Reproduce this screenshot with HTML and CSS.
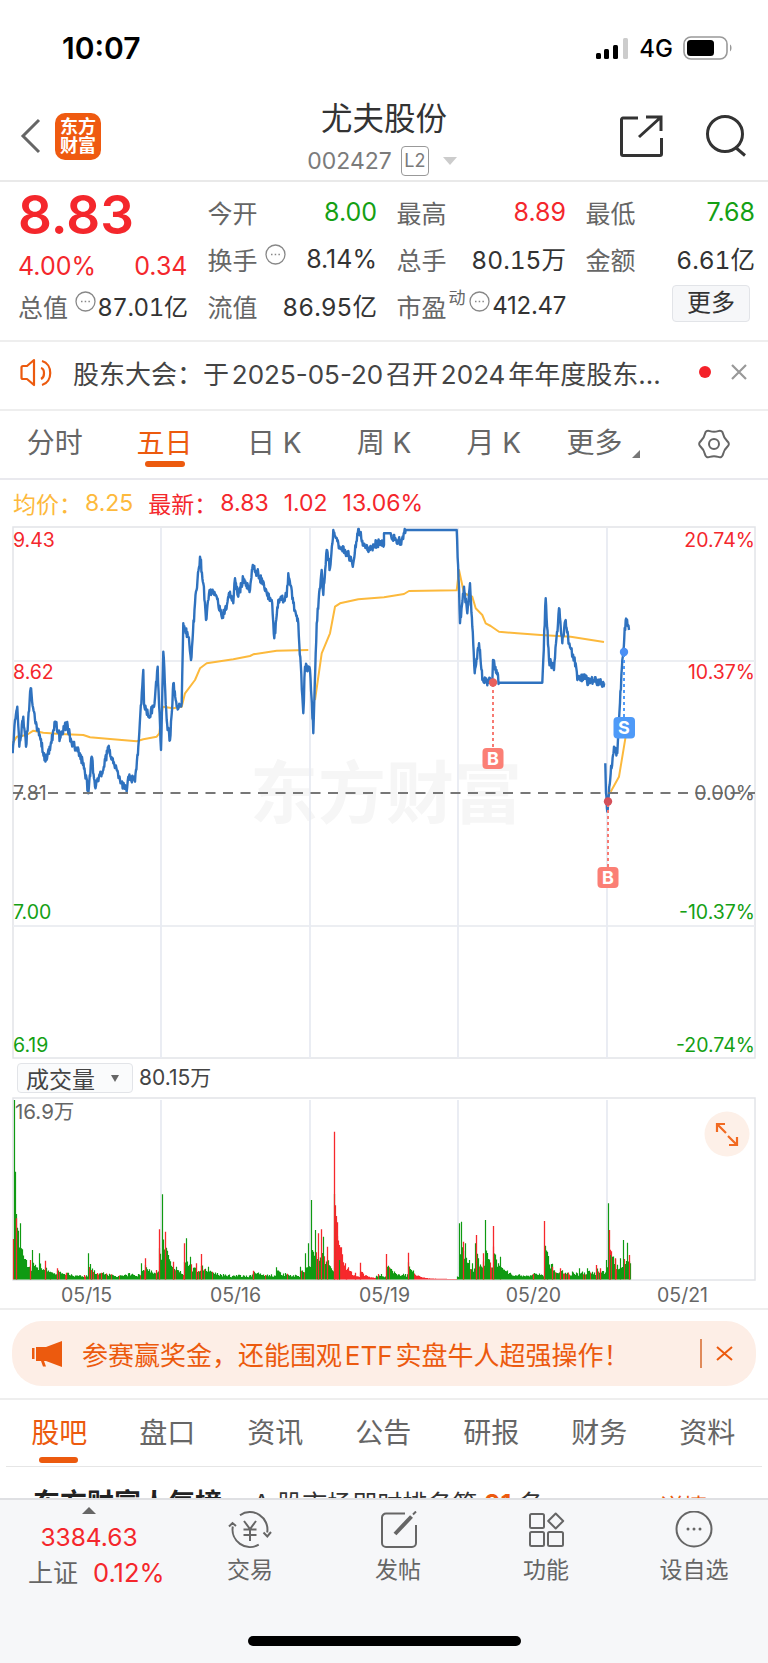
FILE: index.html
```html
<!DOCTYPE html>
<html lang="zh-CN">
<head>
    <meta charset="UTF-8">
    <meta name="viewport" content="width=device-width, initial-scale=1.0">
    <title>尤夫股份 002427</title>
    <link rel="stylesheet" href="styles.css">
</head>
<body>
    <div class="status-bar">
        <span class="time">10:07</span>
        <div class="status-right">
            <svg class="signal" viewBox="0 0 32 21">
                <rect x="0" y="15" width="5" height="6" rx="1.5" fill="#000"/>
                <rect x="8" y="11" width="5" height="10" rx="1.5" fill="#000"/>
                <rect x="17" y="7" width="5" height="14" rx="1.5" fill="#000"/>
                <rect x="27" y="0" width="5" height="21" rx="1.5" fill="#ccc"/>
            </svg>
            <span class="network">4G</span>
            <svg class="battery" viewBox="0 0 50 24">
                <rect x="1" y="1" width="43" height="22" rx="7" fill="none" stroke="#999" stroke-width="1.6"/>
                <rect x="4" y="4" width="27" height="16" rx="3.5" fill="#000"/>
                <path d="M47 8.500 C49 9.500 49 14 47 15.500 Z" fill="#999"/>
            </svg>
        </div>
    </div>

    <div class="header">
        <div class="header-left">
            <svg class="back" viewBox="0 0 22 36">
                <path d="M19 2 L3 18 L19 34" fill="none" stroke="#666" stroke-width="3"/>
            </svg>
            <div class="logo">东方<br>财富</div>
        </div>
        <div class="header-title">
            <div class="stock-name">尤夫股份</div>
            <div class="stock-code">
                <span>002427</span>
                <span class="level-tag">L2</span>
                <span class="code-arrow"></span>
            </div>
        </div>
        <div class="header-right">
            <svg class="header-icon" viewBox="0 0 44 44">
                <path d="M19 4 H4 a1.500 1.500 0 0 0 -1.500 1.500 V40 a1.500 1.500 0 0 0 1.500 1.500 H41 a1.500 1.500 0 0 0 1.500 -1.500 V24" fill="none" stroke="#333" stroke-width="3"/>
                <path d="M20 23 L41.500 3.500 M27 3 H42 V17" fill="none" stroke="#333" stroke-width="3"/>
            </svg>
            <svg class="header-icon" viewBox="0 0 44 44">
                <circle cx="21" cy="20" r="17.500" fill="none" stroke="#333" stroke-width="3"/>
                <path d="M31 33 L41 41.500" stroke="#333" stroke-width="3"/>
            </svg>
        </div>
    </div>

    <div class="quote">
        <div class="quote-left">
            <div class="price red">8.83</div>
            <div class="change red"><span>4.00%</span><span>0.34</span></div>
            <div class="stat">
                <span class="stat-label">总值</span>
                <svg class="dots-icon" viewBox="0 0 21 21"><circle cx="10.500" cy="10.500" r="9.500"/><path d="M6 10.500 h1.500 M9.700 10.500 h1.500 M13.400 10.500 h1.500"/></svg>
                <span class="stat-value stat-wide stat-tight">87.01亿</span>
            </div>
        </div>
        <div class="stats">
            <div class="stat"><span class="stat-label">今开</span><span class="stat-value green">8.00</span></div>
            <div class="stat"><span class="stat-label">最高</span><span class="stat-value red">8.89</span></div>
            <div class="stat"><span class="stat-label">最低</span><span class="stat-value green">7.68</span></div>
            <div class="stat">
                <span class="stat-label">换手</span>
                <svg class="dots-icon" viewBox="0 0 21 21"><circle cx="10.500" cy="10.500" r="9.500"/><path d="M6 10.500 h1.500 M9.700 10.500 h1.500 M13.400 10.500 h1.500"/></svg>
                <span class="stat-value">8.14%</span>
            </div>
            <div class="stat"><span class="stat-label">总手</span><span class="stat-value stat-wide">80.15万</span></div>
            <div class="stat"><span class="stat-label">金额</span><span class="stat-value stat-wide">6.61亿</span></div>
            <div class="stat"><span class="stat-label">流值</span><span class="stat-value stat-wide">86.95亿</span></div>
            <div class="stat">
                <span class="stat-label">市盈</span>
                <span class="dynamic-tag">动</span>
                <svg class="dots-icon dots-tight" viewBox="0 0 21 21"><circle cx="10.500" cy="10.500" r="9.500"/><path d="M6 10.500 h1.500 M9.700 10.500 h1.500 M13.400 10.500 h1.500"/></svg>
                <span class="stat-value stat-small">412.47</span>
            </div>
            <div class="stat stat-end"><span class="more-btn">更多</span></div>
        </div>
    </div>

    <div class="notice">
        <svg class="notice-speaker" viewBox="0 0 33 29">
            <path d="M14 2 L7 8 H3 a1.500 1.500 0 0 0 -1.500 1.500 V19.500 a1.500 1.500 0 0 0 1.500 1.500 H7 L14 27 Z" fill="none" stroke="#ec5a0e" stroke-width="2.200" stroke-linejoin="round"/>
            <path d="M21 10 C25 11 25 19 21 21 M22 3 C33 6 33 24 22 27" fill="none" stroke="#ec5a0e" stroke-width="2.200"/>
        </svg>
        <span class="notice-text">股东大会：于 2025-05-20 召开 2024 年年度股东...</span>
        <span class="notice-dot"></span>
        <svg class="notice-close" viewBox="0 0 16 16">
            <path d="M1 1 L15 15 M15 1 L1 15" stroke="#999" stroke-width="2.200"/>
        </svg>
    </div>

    <div class="period-tabs">
        <div class="period-tab">分时</div>
        <div class="period-tab active">五日</div>
        <div class="period-tab">日 K</div>
        <div class="period-tab">周 K</div>
        <div class="period-tab">月 K</div>
        <div class="period-tab period-more">更多<span class="corner-arrow"></span></div>
        <div class="period-tab">
            <svg class="gear" viewBox="-16 -15 32 30">
                <path d="M13.23 -2.875 Q16.5 0 13.23 2.875 Q9.96 5.75 9.1 10.02 Q8.25 14.29 4.125 12.9 Q0 11.5 -4.125 12.9 Q-8.25 14.29 -9.1 10.02 Q-9.96 5.75 -13.23 2.875 Q-16.5 0 -13.23 -2.875 Q-9.96 -5.75 -9.1 -10.02 Q-8.25 -14.29 -4.125 -12.9 Q0 -11.5 4.125 -12.9 Q8.25 -14.29 9.1 -10.02 Q9.96 -5.75 13.23 -2.875 Z" fill="none" stroke="#666" stroke-width="2"/>
                <circle r="5" fill="none" stroke="#666" stroke-width="2"/>
            </svg>
        </div>
    </div>

    <div class="price-legend">
        <span class="yellow legend-label">均价：</span><span class="yellow">8.25</span>
        <span class="red legend-label legend-next">最新：</span><span class="red">8.83</span>
        <span class="red legend-gap">1.02</span>
        <span class="red legend-gap">13.06%</span>
    </div>

    <svg class="price-chart" viewBox="12 526 744 533">
        <text class="watermark" x="250" y="818">东方财富</text>
        <rect x="13" y="527" width="742" height="531" fill="none" stroke="#e2e4e8" stroke-width="1.500"/>
        <path d="M13 661 H755 M13 926 H755" stroke="#eceef2" stroke-width="2"/>
        <path d="M161 528 V1058 M310 528 V1058 M458 528 V1058 M607 528 V1058" stroke="#e8ebf2" stroke-width="1.800"/>

        <path id="avg-line" fill="none" stroke="#fcb93c" stroke-width="2" stroke-linejoin="round"/>
        <path id="price-line" fill="none" stroke="#2f72bf" stroke-width="2.400" stroke-linejoin="round"/>
        <path d="M13 793 H755" stroke="#777" stroke-width="2.200" stroke-dasharray="10 7.500"/>

        <text class="axis red" x="13" y="547">9.43</text>
        <text class="axis red" x="13" y="679">8.62</text>
        <text class="axis gray" x="13" y="800">7.81</text>
        <text class="axis green" x="13" y="919">7.00</text>
        <text class="axis green" x="13" y="1052">6.19</text>
        <text class="axis axis-end red" x="755" y="547">20.74%</text>
        <text class="axis axis-end red" x="755" y="679">10.37%</text>
        <text class="axis axis-end gray" x="755" y="800">0.00%</text>
        <text class="axis axis-end green" x="755" y="919">-10.37%</text>
        <text class="axis axis-end green" x="755" y="1052">-20.74%</text>

        <path d="M493 684 V748" stroke="#f77a72" stroke-width="2" stroke-dasharray="3 3"/>
        <circle cx="493" cy="682.500" r="4.200" fill="#e8605c"/>
        <rect x="482.500" y="748" width="21" height="21" rx="4" fill="#fb7f75"/>
        <text class="badge" x="493" y="765">B</text>

        <path d="M608 804 V867" stroke="#f77a72" stroke-width="2" stroke-dasharray="3 3"/>
        <circle cx="608" cy="801.500" r="4.200" fill="#d4505a"/>
        <rect x="597.500" y="867" width="21" height="21" rx="4" fill="#fb7f75"/>
        <text class="badge" x="608" y="884">B</text>

        <path d="M624 654 V717" stroke="#4e9af8" stroke-width="2" stroke-dasharray="3 3"/>
        <circle cx="624" cy="652" r="4.200" fill="#4a90f5"/>
        <rect x="613.500" y="717" width="21.500" height="21.500" rx="4" fill="#4e9af8"/>
        <text class="badge" x="624" y="734">S</text>
    </svg>

    <div class="volume-head">
        <div class="volume-select">成交量<span class="select-arrow"></span></div>
        <span class="volume-total">80.15万</span>
    </div>

    <svg class="volume-chart" viewBox="12 1097 744 184">
        <rect x="13" y="1098" width="742" height="182" fill="none" stroke="#e2e4e8" stroke-width="1.500"/>
        <path d="M161 1100 V1280 M310 1100 V1280 M458 1100 V1280 M607 1100 V1280" stroke="#e8ebf2" stroke-width="1.800"/>
        <path id="vol-red" fill="none" stroke="#f6282c" stroke-width="1.200"/>
        <path id="vol-green" fill="none" stroke="#0f9a12" stroke-width="1.200"/>
        <path id="vol-spikes-red" fill="none" stroke="#f6282c" stroke-width="1.300"/>
        <text class="axis axis-vol gray" x="15" y="1119">16.9万</text>
        <circle cx="727" cy="1134" r="22.500" fill="#fdf0e8"/>
        <path d="M717 1124 L726 1133 M717 1132 V1124 H725 M737 1145 L728 1136 M737 1137 V1145 H729" fill="none" stroke="#f16a22" stroke-width="2.200"/>
    </svg>

    <div class="date-axis">
        <span>05/15</span>
        <span>05/16</span>
        <span>05/19</span>
        <span>05/20</span>
        <span>05/21</span>
    </div>

    <div class="promo-wrap">
        <div class="promo">
            <svg class="promo-icon" viewBox="0 0 30 26">
                <path d="M0 7 H2.500 V18 H0 Z M4 6 H14 L30 0 V26 L14 20 H12 L14 25.500 H11 L9 20 H4 Z" fill="#ec5a0e"/>
            </svg>
            <span class="promo-text">参赛赢奖金，还能围观 ETF 实盘牛人超强操作！</span>
            <span class="promo-line"></span>
            <svg class="promo-close" viewBox="0 0 17 15">
                <path d="M1 1 L16 14 M16 1 L1 14" stroke="#ec5a0e" stroke-width="2"/>
            </svg>
        </div>
    </div>

    <div class="info-tabs">
        <div class="info-tab active">股吧</div>
        <div class="info-tab">盘口</div>
        <div class="info-tab">资讯</div>
        <div class="info-tab">公告</div>
        <div class="info-tab">研报</div>
        <div class="info-tab">财务</div>
        <div class="info-tab">资料</div>
    </div>

    <div class="rank-row">
        <strong class="rank-title">东方财富人气榜</strong>
        <span class="rank-text">A 股市场即时排名第 <b class="orange">91</b> 名</span>
        <span class="rank-link orange">详情 <span class="rank-chevron">»</span></span>
    </div>

    <div class="bottom-nav">
        <div class="nav-items">
            <div class="nav-index">
                <span class="index-arrow"></span>
                <div class="index-price red">3384.63</div>
                <div class="index-line"><span class="index-name">上证</span><span class="red">0.12%</span></div>
            </div>
            <div class="nav-item">
                <svg class="nav-icon" viewBox="0 0 44 38">
                    <path d="M12 4.200 A17.500 17.500 0 0 1 39.200 21.500 M35.500 21.500 L39.300 25.500 L43 21 M30.750 33.700 A17.500 17.500 0 0 1 4.800 15.500 M1 15.500 L4.500 12 L8 15"/>
                    <path d="M16 10 L22 18 L28 10 M15.500 18.500 H28.500 M15.500 24 H28.500 M22 18 V30"/>
                </svg>
                <span>交易</span>
            </div>
            <div class="nav-item">
                <svg class="nav-icon" viewBox="0 0 44 38">
                    <path d="M29 2.500 H10 a4 4 0 0 0 -4 4 V32 a4 4 0 0 0 4 4 H36 a4 4 0 0 0 4 -4 V14"/>
                    <path class="pencil" d="M19 23 L35.500 5.500"/>
                    <path d="M37 3.500 L40 0.500"/>
                </svg>
                <span>发帖</span>
            </div>
            <div class="nav-item">
                <svg class="nav-icon" viewBox="0 0 44 38">
                    <rect x="6" y="3" width="14" height="14" rx="1.500"/>
                    <rect x="6" y="21" width="14" height="14" rx="1.500"/>
                    <rect x="24" y="21" width="15" height="14" rx="1.500"/>
                    <path d="M31.700 2.500 L39.200 10 L31.700 17.500 L24.200 10 Z" stroke-linejoin="round"/>
                </svg>
                <span>功能</span>
            </div>
            <div class="nav-item">
                <svg class="nav-icon" viewBox="0 0 44 38">
                    <circle cx="22" cy="18" r="17.500"/>
                    <circle class="nav-dot" cx="16" cy="18" r="1.500"/>
                    <circle class="nav-dot" cx="22" cy="18" r="1.500"/>
                    <circle class="nav-dot" cx="28" cy="18" r="1.500"/>
                </svg>
                <span>设自选</span>
            </div>
        </div>
        <div class="home-bar"></div>
    </div>

    <script src="chart.js"></script>
</body>
</html>
```

FILE: styles.css
```css
* {
    box-sizing: border-box;
}

body {
    font-family: Inter, "Noto Sans CJK SC", sans-serif;
    margin: 0;
    width: 768px;
    height: 1663px;
    position: relative;
    overflow: hidden;
    background-color: #fff;
    color: #333;
}

svg {
    display: block;
}

.red {
    color: #f4272c;
    fill: #f4272c;
}

.green {
    color: #14a014;
    fill: #14a014;
}

.gray {
    fill: #666;
}

.yellow {
    color: #fdb93c;
}

.orange {
    color: #ec5a0e;
}

/* status bar */
.status-bar {
    height: 100px;
    padding: 0 35px 4px 62px;
    display: flex;
    align-items: center;
    justify-content: space-between;
}

.time {
    font-size: 30px;
    font-weight: 600;
    color: #000;
}

.status-right {
    display: flex;
    align-items: center;
}

.signal {
    width: 32px;
    height: 21px;
}

.network {
    font-size: 24px;
    font-weight: 500;
    color: #000;
    margin: 0 10px 0 11px;
}

.battery {
    width: 50px;
    height: 24px;
}

/* header */
.header {
    height: 82px;
    border-bottom: 2px solid #e9e9e9;
    display: flex;
}

.header-left,
.header-right {
    flex: 1;
    height: 48px;
    margin-top: 12px;
    display: flex;
    align-items: center;
}

.header-left {
    padding-left: 20px;
    gap: 13px;
}

.header-right {
    justify-content: flex-end;
    padding-right: 20px;
    gap: 41px;
}

.back {
    width: 22px;
    height: 36px;
}

.logo {
    width: 46px;
    height: 47px;
    border-radius: 10px;
    background-color: #ef5a10;
    color: #fff;
    font-size: 18px;
    font-weight: 700;
    line-height: 19px;
    text-align: center;
    padding-top: 4px;
}

.header-icon {
    width: 44px;
    height: 44px;
}

.header-title {
    width: 200px;
    padding-top: 1px;
}

.stock-name {
    font-size: 31.500px;
    line-height: 36px;
    text-align: center;
    color: #333;
}

.stock-code {
    margin-top: 9px;
    height: 30px;
    display: flex;
    align-items: center;
    justify-content: center;
    font-size: 23px;
    color: #7b7b7b;
    margin-left: -4px;
}

.level-tag {
    width: 28px;
    height: 30px;
    margin: 0 14px 0 9px;
    border: 1px solid #999;
    border-radius: 4px;
    font-size: 18px;
    line-height: 28px;
    text-align: center;
}

.code-arrow {
    border-left: 7px solid transparent;
    border-right: 7px solid transparent;
    border-top: 8px solid #ccc;
}

/* quote block */
.quote {
    height: 160px;
    padding: 6px 13px 0 18px;
    border-bottom: 2px solid #eee;
    display: flex;
    gap: 20px;
}

.quote-left {
    width: 170px;
}

.price {
    height: 54px;
    font-size: 53px;
    font-weight: 600;
    line-height: 54px;
}

.change {
    height: 36px;
    margin-bottom: 4px;
    display: flex;
    align-items: flex-end;
    justify-content: space-between;
    font-size: 25px;
    line-height: 24px;
}

.stats {
    flex: 1;
    display: grid;
    grid-template-columns: repeat(3, 169.500px);
    grid-auto-rows: 47px;
    column-gap: 19.500px;
}

.stat {
    height: 47px;
    display: flex;
    align-items: center;
    font-size: 25px;
    white-space: nowrap;
}

.stat-label {
    flex-shrink: 0;
    font-size: 25px;
    color: #666;
}

.stat-value {
    margin-left: auto;
}

.stat-wide {
    font-size: 24.500px;
    font-variant-numeric: tabular-nums;
}

.stat-tight {
    font-size: 24px;
    letter-spacing: -0.400px;
}

.stat-small {
    font-size: 24px;
    letter-spacing: -0.300px;
}

.stat-end {
    justify-content: flex-end;
}

.dots-icon {
    flex-shrink: 0;
    width: 21px;
    height: 21px;
    margin: 0 0 9px 7px;
    fill: none;
    stroke: #888;
    stroke-width: 1.300;
}

.dots-tight {
    margin-left: 3px;
}

.dynamic-tag {
    font-size: 17px;
    line-height: 20px;
    color: #666;
    margin: 0 0 16px 2px;
}

.more-btn {
    width: 78px;
    height: 37px;
    margin: 0 5px 5px 0;
    background-color: #f6f7f9;
    border: 1px solid #e2e4e8;
    border-radius: 4px;
    font-size: 24px;
    line-height: 34px;
    text-align: center;
    color: #333;
}

/* notice */
.notice {
    height: 69px;
    padding: 0 20px 7px 20px;
    border-bottom: 2px solid #eee;
    display: flex;
    align-items: center;
}

.notice-speaker {
    width: 33px;
    height: 29px;
    margin-right: 20px;
}

.notice-text {
    width: 626px;
    flex-shrink: 0;
    font-size: 26px;
    white-space: nowrap;
    word-spacing: -4.500px;
    color: #444;
}

.notice-dot {
    width: 12px;
    height: 12px;
    flex-shrink: 0;
    border-radius: 50%;
    background-color: #f4222a;
}

.notice-close {
    width: 16px;
    height: 16px;
    margin-left: 20px;
}

/* period tabs */
.period-tabs {
    height: 69px;
    border-bottom: 2px solid #e9e9ee;
    display: flex;
}

.period-tab {
    width: 110px;
    height: 64px;
    padding-top: 12px;
    position: relative;
    display: flex;
    justify-content: center;
    font-size: 28px;
    line-height: 40px;
    color: #666;
    white-space: nowrap;
}

.period-tab.active {
    color: #ec5a0e;
}

.period-tab.active::after {
    content: "";
    position: absolute;
    left: 35px;
    bottom: 8px;
    width: 40px;
    height: 6px;
    border-radius: 3px;
    background-color: #ec5a0e;
}

.corner-arrow {
    width: 0;
    height: 0;
    margin: 27px 0 0 10px;
    border-left: 8px solid transparent;
    border-bottom: 8px solid #777;
}

.gear {
    width: 32px;
    height: 30px;
    margin: 6px 0 0 2px;
}

/* chart */
.price-legend {
    height: 46px;
    padding-left: 13px;
    display: flex;
    align-items: center;
    font-size: 23px;
    white-space: nowrap;
}

.legend-label {
    width: 72px;
}

.legend-next {
    margin-left: 15px;
}

.legend-gap {
    margin-left: 15px;
}

.price-chart {
    width: 744px;
    height: 533px;
    margin-left: 12px;
}

.watermark {
    font-size: 68px;
    font-weight: 700;
    fill: #f6f6f6;
}

.axis {
    font-size: 19.500px;
}

.axis-vol {
    font-size: 20.500px;
}

.axis-end {
    text-anchor: end;
}

.badge {
    font-size: 18px;
    font-weight: 700;
    fill: #fff;
    text-anchor: middle;
}

.volume-head {
    height: 38px;
    padding: 4px 0 0 17px;
    display: flex;
    align-items: flex-start;
}

.volume-select {
    width: 116px;
    height: 30px;
    padding-left: 8px;
    border: 1px solid #e2e4e8;
    border-radius: 4px;
    background-color: #fafbfc;
    display: flex;
    align-items: center;
    font-size: 23px;
    color: #444;
}

.select-arrow {
    margin-left: 16px;
    border-left: 4px solid transparent;
    border-right: 4px solid transparent;
    border-top: 7px solid #666;
}

.volume-total {
    margin-left: 6px;
    font-size: 21px;
    line-height: 30px;
    color: #444;
}

.volume-chart {
    width: 744px;
    height: 184px;
    margin-left: 12px;
}

.date-axis {
    height: 29px;
    padding: 0 0 0 12px;
    border-bottom: 2px solid #eee;
    display: grid;
    grid-template-columns: repeat(5, 149px);
    font-size: 19.500px;
    line-height: 28px;
    text-align: center;
    color: #666;
}

/* promo banner */
.promo-wrap {
    height: 90px;
    padding: 11px 12px 0;
    border-bottom: 2px solid #eee;
}

.promo {
    height: 65px;
    padding-left: 20px;
    border-radius: 30px;
    background-color: #fdeee6;
    display: flex;
    align-items: center;
}

.promo-icon {
    width: 30px;
    height: 26px;
    margin-right: 20px;
}

.promo-text {
    width: 618px;
    font-size: 26px;
    white-space: nowrap;
    word-spacing: -4.500px;
    color: #ec5a0e;
}

.promo-line {
    width: 1.500px;
    height: 29px;
    background-color: #e08a5a;
}

.promo-close {
    width: 17px;
    height: 15px;
    margin-left: 14px;
}

/* info tabs */
.info-tabs {
    height: 67px;
    margin: 0 6px;
    border-bottom: 1px solid #e6e6e6;
    display: grid;
    grid-template-columns: repeat(7, 108px);
}

.info-tab {
    padding-top: 13px;
    font-size: 28px;
    line-height: 40px;
    text-align: center;
    color: #666;
    position: relative;
    margin-left: -1.500px;
}

.info-tab.active {
    color: #ec5a0e;
}

.info-tab.active::after {
    content: "";
    position: absolute;
    left: 34px;
    top: 57px;
    width: 39px;
    height: 6px;
    border-radius: 3px;
    background-color: #ec5a0e;
}

.rank-row {
    height: 60px;
    padding: 20px 34px 0 33px;
    display: flex;
    font-size: 25px;
    line-height: 34px;
    white-space: nowrap;
}

.rank-title {
    font-size: 27px;
    color: #222;
}

.rank-text {
    margin-left: 31px;
}

.rank-link {
    margin-left: auto;
    font-size: 24px;
}

.rank-chevron {
    font-size: 34px;
    line-height: 1;
}

/* bottom navigation lies over the scrolling content */
.bottom-nav {
    position: absolute;
    left: 0;
    right: 0;
    bottom: 0;
    height: 165px;
    border-top: 2px solid #dfe0e3;
    background-color: #f6f7f9;
}

.nav-items {
    height: 136px;
    display: flex;
}

.nav-index {
    width: 176px;
    padding-left: 28px;
    position: relative;
}

.index-arrow {
    display: block;
    width: 0;
    margin: 7px 0 0 54px;
    border-left: 7px solid transparent;
    border-right: 7px solid transparent;
    border-bottom: 7px solid #666;
}

.index-price {
    width: 122px;
    margin-top: 8px;
    font-size: 24.500px;
    line-height: 30px;
    text-align: center;
}

.index-line {
    margin-top: 4px;
    font-size: 25.500px;
    line-height: 34px;
    display: flex;
}

.index-name {
    width: 65px;
    font-size: 25px;
    color: #666;
}

.nav-item {
    width: 148px;
    padding-top: 11px;
    display: flex;
    flex-direction: column;
    align-items: center;
    font-size: 23px;
    line-height: 26px;
    color: #666;
}

.nav-icon {
    width: 44px;
    height: 38px;
    margin-bottom: 8px;
    fill: none;
    stroke: #666;
    stroke-width: 2;
}

.nav-icon .pencil {
    stroke-width: 4;
}

.nav-icon .nav-dot {
    fill: #666;
    stroke: none;
}

.home-bar {
    width: 273px;
    height: 10px;
    margin: 0 auto;
    border-radius: 5px;
    background-color: #000;
}
```

FILE: chart.js
```js
// points were read off the 3x zoom, x3 = (x - ox) * 3, y3 = (y - oy) * 3
const priceLeft = [[38,700],[45,600],[52,560],[58,680],[70,590],[78,680],[92,505],[105,600],[120,650],[135,720],[150,690],[165,605],[180,655],[200,610],[215,670],[240,700],[255,760],[265,820],[275,710],[285,800],[310,750],[325,680],[340,730],[360,780],[380,815],[385,770],[405,785],[415,680],[430,450],[432,550],[445,590],[462,560],[473,440],[483,690],[490,395],[500,600],[510,660],[520,490],[530,560],[545,550],[550,310],[565,350],[573,420],[585,250],[600,110],[610,190],[618,300],[630,210],[650,230],[665,290],[675,270],[690,215],[700,250],[705,175],[715,230],[730,175],[750,210],[757,145],[775,160],[800,220],[815,240],[823,355],[835,240],[860,230],[865,160],[880,250],[895,310],[910,580],[915,440],[930,450],[940,640],[950,310],[965,150],[970,225],[980,90],[990,145],[1000,30],[1015,70],[1035,90],[1060,130],[1075,25],[1090,70],[1110,90],[1130,70],[1152,75]];
const priceRight = [[0,40],[20,40],[35,60],[50,65],[65,30],[218,30,1],[225,200],[228,310],[240,200],[250,280],[258,190],[265,320],[272,460],[285,370],[295,480],[325,488],[327,420],[345,488],[475,488,1],[485,235],[495,420],[510,450],[525,265],[535,370],[545,300],[555,370],[575,430],[580,480],[600,470],[615,490],[630,480],[662,490]];
const priceToday = [[664,730],[666,820],[670,875],[680,760],[690,680],[700,700],[705,600],[715,420],[725,300],[735,330]];

const avgSegments = [
    [0, [[38,670],[50,650],[80,645],[100,632],[130,638],[180,642],[250,645],[270,652],[330,657],[410,664],[430,658],[470,650],[478,640],[488,560],[520,565],[545,560],[555,520],[585,480],[600,445],[620,430],[700,418],[750,408],[760,403],[830,392],[925,390]]],
    [0, [[945,540],[965,400],[990,340],[1005,260],[1020,250],[1075,238],[1152,232]]],
    [384, [[0,232],[60,222],[75,213],[218,211],[225,150],[240,220],[265,230],[275,265],[295,285],[305,310],[320,318],[345,335],[400,340],[470,345],[560,350],[660,366]]],
    [384, [[680,815],[705,770],[730,620]]]
];

// [x3, y3, 1 = red]
const volumeLeft = [[42,150],[45,365],[50,505,1],[60,520],[65,595],[78,630],[90,630,1],[98,600],[118,610],[135,632,1],[150,665],[172,655,1],[200,668,1],[265,610],[275,660,1],[305,668,1],[385,670],[423,640],[435,625,1],[445,665],[470,660,1],[478,538,1],[488,433],[495,545,1],[500,600],[520,635,1],[530,650],[553,580,1],[560,565],[570,620],[590,640,1],[603,612,1],[625,650],[640,675],[760,662,1],[828,652],[900,650],[915,610],[925,580],[933,450],[945,540],[955,550,1],[965,538,1],[970,560],[982,590,1],[1003,245,1],[1012,517,1],[1018,630],[1040,660,1],[1065,668,1],[1080,638,1]];
const volumeRight = [[8,612,1],[72,608,1],[75,650],[225,520],[232,515],[238,575,1],[243,580],[255,630],[265,640],[275,580],[278,555,1],[290,660],[297,610,1],[303,510],[315,665],[328,528,1],[335,635],[348,620],[360,680],[448,672,1],[482,513,1],[490,605],[505,650,1],[530,655,1],[545,670],[565,670],[585,655],[610,655],[625,665],[638,645,1],[650,655,1],[668,630],[672,460],[675,540,1],[680,615],[695,625,1],[710,625],[717,570],[730,578],[735,615,1],[740,640]];

let seed = 20250520;
function rnd() {
    seed = (seed * 1664525 + 1013904223) % 4294967296;
    return seed / 4294967296;
}

function toPage(points, ox, oy) {
    return points.map(p => [ox + p[0] / 3, oy + p[1] / 3, p[2]]);
}

function smoothPath(points) {
    return 'M' + points.map(p => p[0].toFixed(1) + ' ' + p[1].toFixed(1)).join(' L');
}

// walk the segments with a tremble, flat stretches stay flat
function jaggedPath(points) {
    const out = [points[0]];
    for (let i = 1; i < points.length; i++) {
        const a = points[i - 1];
        const b = points[i];
        const steps = Math.max(1, Math.round((b[0] - a[0]) / 0.5));
        for (let s = 1; s <= steps; s++) {
            const t = s / steps;
            let y = a[1] + (b[1] - a[1]) * t;
            if (s < steps && !b[2] && a[1] !== b[1]) {
                y += (rnd() - 0.5) * 9;
            }
            out.push([a[0] + (b[0] - a[0]) * t, Math.max(529, y)]);
        }
    }
    return smoothPath(out);
}

function drawPrice() {
    const joined = toPage(priceLeft, 0, 520).concat(toPage(priceRight, 384, 520));
    const d = jaggedPath(joined) + ' ' + jaggedPath(toPage(priceToday, 384, 520));
    document.getElementById('price-line').setAttribute('d', d);

    const avg = avgSegments.map(s => smoothPath(toPage(s[1], s[0], 520))).join(' ');
    document.getElementById('avg-line').setAttribute('d', avg);
}

function drawVolume() {
    const base = 1279.5;
    const spikes = toPage(volumeLeft, 0, 1050).concat(toPage(volumeRight, 384, 1050));
    let green = '';
    let red = '';
    let spikesRed = '';

    for (let x = 13.5; x < 631.5; x += 1) {
        let env = 0;
        spikes.forEach(s => {
            if (x >= s[0]) {
                env = Math.max(env, (base - s[1]) * 0.6 * Math.exp(-(x - s[0]) / 7));
            }
        });
        const quiet = (x > 414 && x < 457) || (x > 335 && x < 376);
        const h = env * (0.55 + 0.45 * rnd()) + (quiet ? 0.6 : 2 + rnd() * 3);
        const bar = 'M' + x + ' ' + base + ' V' + (base - h).toFixed(1);
        if (quiet || rnd() < 0.1) {
            red += bar;
        } else {
            green += bar;
        }
    }

    spikes.forEach(s => {
        const x = Math.round(s[0] - 0.5) + 0.5;
        const bar = 'M' + x + ' ' + base + ' V' + s[1].toFixed(1);
        if (s[2]) {
            spikesRed += bar;
        } else {
            green += bar;
        }
    });
    red += 'M13.5 ' + base + ' V1239';

    document.getElementById('vol-green').setAttribute('d', green);
    document.getElementById('vol-red').setAttribute('d', red);
    document.getElementById('vol-spikes-red').setAttribute('d', spikesRed);
}

drawPrice();
drawVolume();
```
